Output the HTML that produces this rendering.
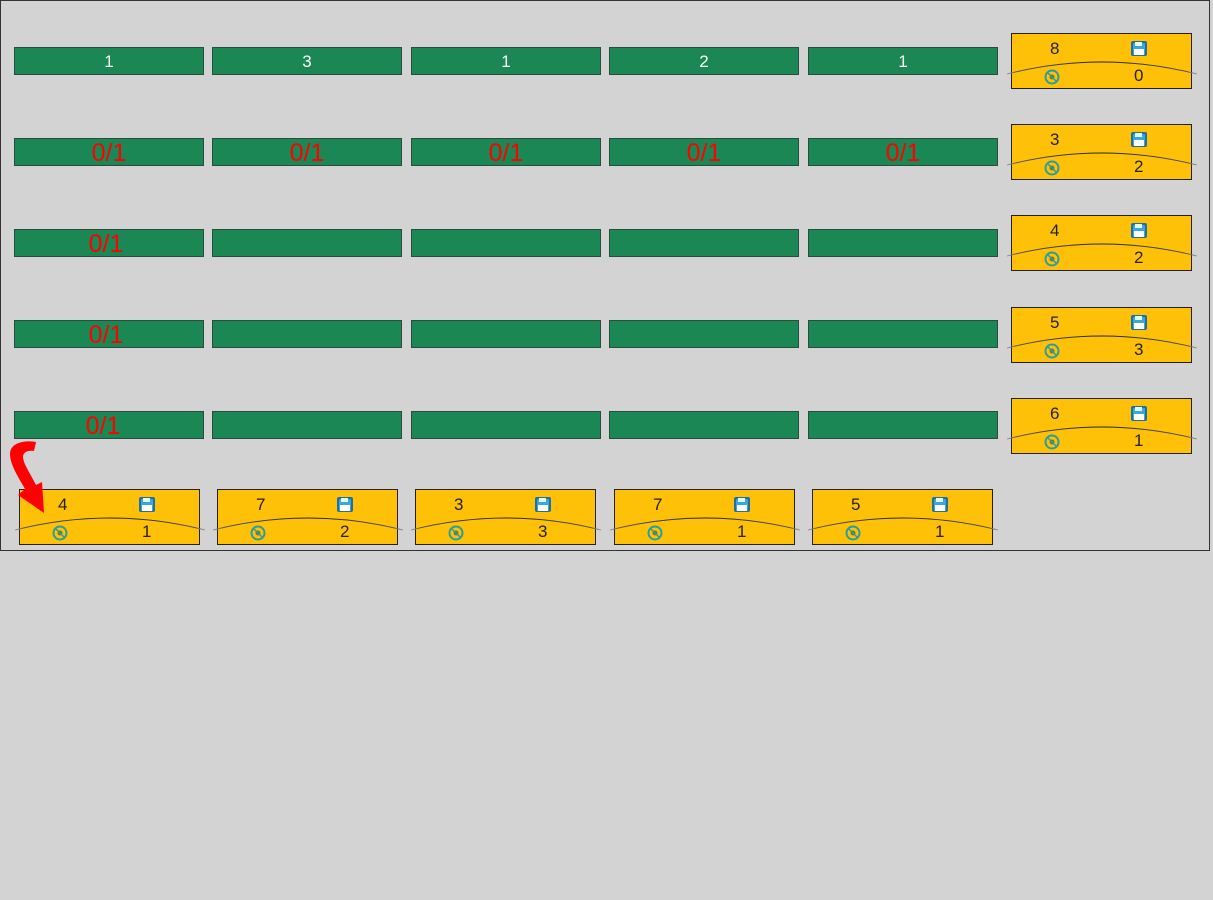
<!DOCTYPE html>
<html><head><meta charset="utf-8"><style>
body{margin:0;width:1213px;height:900px;background:#d3d3d3;font-family:"Liberation Sans","DejaVu Sans",sans-serif;position:relative;overflow:hidden}
.box{position:absolute;left:0;top:0;width:1208px;height:549px;border:1px solid #333}
.g{position:absolute;width:188px;height:26px;background:#1a8754;border:1px solid #2d4a3e;color:#fff;font-size:17px;text-align:center;line-height:28px}
.r{color:#f00;font-size:25px;line-height:29px}
.c{position:absolute;width:179px;height:54px;background:#ffc107;border:1px solid #222;font-size:17px;color:#222}
.c .t{position:absolute;left:38px;top:5px}
.c .b{position:absolute;left:122px;top:32px}
.c svg{position:absolute;left:0;top:0;overflow:visible}
</style></head><body>
<div class="box"></div>
<svg width="0" height="0" style="position:absolute"><defs>
<linearGradient id="lg" x1="0" x2="1" y1="0" y2="0"><stop offset="0" stop-color="#999"/><stop offset="0.05" stop-color="#555"/><stop offset="0.5" stop-color="#222"/><stop offset="0.95" stop-color="#555"/><stop offset="1" stop-color="#999"/></linearGradient>
<g id="ic">
<path d="M-5 40 Q90 16 185 40" fill="none" stroke="url(#lg)" stroke-width="1"/>
<rect x="119" y="7" width="16" height="15" rx="2" fill="#1f6fa0"/>
<rect x="121" y="9" width="12" height="12" rx="1" fill="#3aa7e0"/>
<rect x="122" y="15" width="10" height="6" fill="#fff"/>
<rect x="123" y="8" width="7" height="4" fill="#dfe"/>
<circle cx="40" cy="43" r="6.5" fill="none" stroke="#2a9d9f" stroke-width="2"/>
<circle cx="40" cy="43" r="2.5" fill="#6b7a3a"/>
<line x1="35.5" y1="38.5" x2="44.5" y2="47.5" stroke="#2a9d9f" stroke-width="1.5"/>
</g></defs></svg>

<div class="g" style="left:14px;top:47px">1</div>
<div class="g" style="left:212px;top:47px">3</div>
<div class="g" style="left:411px;top:47px">1</div>
<div class="g" style="left:609px;top:47px">2</div>
<div class="g" style="left:808px;top:47px">1</div>

<div class="g r" style="left:14px;top:138px">0/1</div>
<div class="g r" style="left:212px;top:138px">0/1</div>
<div class="g r" style="left:411px;top:138px">0/1</div>
<div class="g r" style="left:609px;top:138px">0/1</div>
<div class="g r" style="left:808px;top:138px">0/1</div>

<div class="g r" style="left:14px;top:229px;text-indent:-6px">0/1</div>
<div class="g" style="left:212px;top:229px"></div>
<div class="g" style="left:411px;top:229px"></div>
<div class="g" style="left:609px;top:229px"></div>
<div class="g" style="left:808px;top:229px"></div>

<div class="g r" style="left:14px;top:320px;text-indent:-6px">0/1</div>
<div class="g" style="left:212px;top:320px"></div>
<div class="g" style="left:411px;top:320px"></div>
<div class="g" style="left:609px;top:320px"></div>
<div class="g" style="left:808px;top:320px"></div>

<div class="g r" style="left:14px;top:411px;text-indent:-12px">0/1</div>
<div class="g" style="left:212px;top:411px"></div>
<div class="g" style="left:411px;top:411px"></div>
<div class="g" style="left:609px;top:411px"></div>
<div class="g" style="left:808px;top:411px"></div>

<div class="c" style="left:1011px;top:33px"><span class="t">8</span><span class="b">0</span><svg width="180" height="55"><use href="#ic"/></svg></div>
<div class="c" style="left:1011px;top:124px"><span class="t">3</span><span class="b">2</span><svg width="180" height="55"><use href="#ic"/></svg></div>
<div class="c" style="left:1011px;top:215px"><span class="t">4</span><span class="b">2</span><svg width="180" height="55"><use href="#ic"/></svg></div>
<div class="c" style="left:1011px;top:307px"><span class="t">5</span><span class="b">3</span><svg width="180" height="55"><use href="#ic"/></svg></div>
<div class="c" style="left:1011px;top:398px"><span class="t">6</span><span class="b">1</span><svg width="180" height="55"><use href="#ic"/></svg></div>

<div class="c" style="left:19px;top:489px"><span class="t">4</span><span class="b">1</span><svg width="180" height="55"><use href="#ic"/></svg></div>
<div class="c" style="left:217px;top:489px"><span class="t">7</span><span class="b">2</span><svg width="180" height="55"><use href="#ic"/></svg></div>
<div class="c" style="left:415px;top:489px"><span class="t">3</span><span class="b">3</span><svg width="180" height="55"><use href="#ic"/></svg></div>
<div class="c" style="left:614px;top:489px"><span class="t">7</span><span class="b">1</span><svg width="180" height="55"><use href="#ic"/></svg></div>
<div class="c" style="left:812px;top:489px"><span class="t">5</span><span class="b">1</span><svg width="180" height="55"><use href="#ic"/></svg></div>

<svg style="position:absolute;left:0;top:0" width="60" height="520">
<path d="M36 442 C24 440 10 443 10 454 C10 465 19 478 25 489 L18 495 L44 513 L42 482 L36 485 C30 473 23 463 23 457 C23 452 28 450 34 451 Z" fill="#f00"/>
</svg>
</body></html>
